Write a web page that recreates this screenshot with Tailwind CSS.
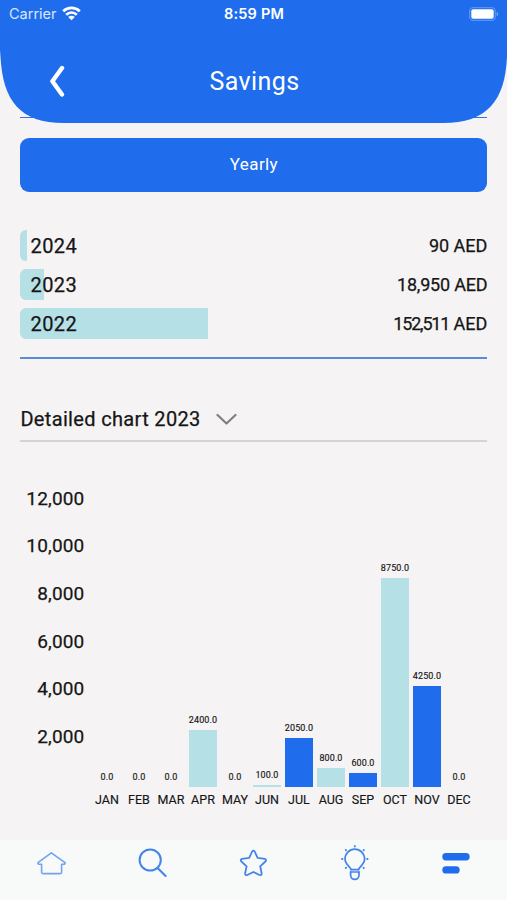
<!DOCTYPE html>
<html lang="en">

<head>
    <meta charset="UTF-8">
    <meta name="viewport" content="width=device-width, initial-scale=1.0">
    <title>Savings</title>
    <script src="https://cdn.jsdelivr.net/npm/@tailwindcss/browser@4"></script>
</head>

<body class="bg-[#f5f3f4] text-[#161616] font-['Roboto',sans-serif]">
    <div class="w-[507px] h-[900px] flex flex-col overflow-hidden">

        <!-- Header Section -->
        <header class="relative z-10 h-[123px] shrink-0 text-white">
            <svg class="absolute inset-0" width="507" height="123" viewBox="0 0 507 123" fill="#1f6dec">
                <path d="M0 0H507V57C505 101 487 123 443 123H64C20 123 3 101 .5 57L0 50Z" />
            </svg>

            <!-- Status Bar -->
            <div class="relative grid grid-cols-3 items-center h-7 pl-[9px] pr-2 font-['Inter',sans-serif]">
                <div class="flex items-center gap-[5px]">
                    <span class="text-[14.5px] text-[#d9e7ff]">Carrier</span>
                    <svg class="-mt-[2px]" width="19" height="15" viewBox="0 0 19 15" fill="none" stroke="#fff" stroke-width="2.7">
                        <path d="M1.2 5.2C6 .7 13 .7 17.8 5.2" />
                        <path d="M4.2 8.8C7.3 5.9 11.7 5.9 14.8 8.8" />
                        <path d="M9.5 14.2L6.2 11.1C8.2 9.3 10.8 9.3 12.8 11.1Z" fill="#fff" stroke="none" />
                    </svg>
                </div>
                <span class="text-center text-[14.5px] font-semibold tracking-[0.2px] whitespace-nowrap">8:59 PM</span>
                <svg class="justify-self-end -mt-px" width="30" height="14" viewBox="0 0 30 14">
                    <rect x=".7" y=".7" width="25.6" height="12.6" rx="3.8" fill="none" stroke="#5b93f2" stroke-width="1.3" />
                    <rect x="2.3" y="2.3" width="22.4" height="9.4" rx="2" fill="#fff" />
                    <path d="M27.7 4.7V9.3C29.7 8.4 29.7 5.6 27.7 4.7Z" fill="#79a8f6" />
                </svg>
            </div>

            <!-- Title -->
            <div class="relative flex items-center justify-center h-[107px] -mt-[1px] pl-[2px] pt-[2px]">
                <svg class="absolute left-[48px] top-[38px]" width="18" height="34" viewBox="0 0 18 34" fill="none" stroke="#fff" stroke-width="4.4" stroke-linecap="round" stroke-linejoin="round">
                    <path d="M14 3L4.4 16.3L14 29.5" />
                </svg>
                <h1 class="text-[25px] leading-none tracking-[0.4px]">Savings</h1>
            </div>
        </header>

        <main class="flex-1 pl-[20.4px]">
            <div class="w-[467px] -mt-[6px] border-t border-[#3272e0] pt-5">
                <button class="block w-full h-[53.5px] rounded-[9px] bg-[#1f6dec] text-white text-[17px] tracking-[0.4px]">Yearly</button>
            </div>

            <!-- Yearly totals -->
            <div class="w-[467px] mt-[38.5px] pb-[18px] flex flex-col gap-2 border-b-2 border-[#5a8ad8] [-webkit-text-stroke:0.25px_#161616]">
                <div class="relative flex items-center justify-between h-[31px]">
                    <div class="absolute left-0 h-full w-[7px] rounded-l-md bg-[#b5e0e6]"></div>
                    <span class="relative pl-[10px] text-[20px] tracking-[0.5px]">2024</span>
                    <span class="-mt-px text-[18px]">90 AED</span>
                </div>
                <div class="relative flex items-center justify-between h-[31px]">
                    <div class="absolute left-0 h-full w-[23.5px] rounded-l-md bg-[#b5e0e6]"></div>
                    <span class="relative pl-[10px] text-[20px] tracking-[0.5px]">2023</span>
                    <span class="-mt-px text-[18px] tracking-[-0.2px]">18,950 AED</span>
                </div>
                <div class="relative flex items-center justify-between h-[31px]">
                    <div class="absolute left-0 h-full w-[187.5px] rounded-l-md bg-[#b5e0e6]"></div>
                    <span class="relative pl-[10px] text-[20px] tracking-[0.5px]">2022</span>
                    <!-- tighter on the digits, normal on the currency -->
                    <span class="-mt-px text-[18px]"><span class="tracking-[-1.2px]">152,511</span> AED</span>
                </div>
            </div>

            <!-- Chart select -->
            <div class="w-[467px] h-[83px] pt-[39px] flex items-center gap-[15px] border-b-2 border-[#d5d4d5]">
                <span class="text-[20px] tracking-[0.34px] [-webkit-text-stroke:0.25px_#161616]">Detailed chart 2023</span>
                <svg width="21" height="13" viewBox="0 0 21 13" fill="none" stroke="#808080" stroke-width="2.2" stroke-linecap="round" stroke-linejoin="round">
                    <path d="M1.5 2L10.5 10.5L19.5 2" />
                </svg>
            </div>

            <!-- Monthly chart -->
            <div class="flex mt-[33px]">
                <div class="w-[64px] text-[19px] tracking-[0.15px] [-webkit-text-stroke:0.25px_#161616]">
                    <div class="h-[47.7px] flex items-center justify-end">12,000</div>
                    <div class="h-[47.7px] flex items-center justify-end">10,000</div>
                    <div class="h-[47.7px] flex items-center justify-end">8,000</div>
                    <div class="h-[47.7px] flex items-center justify-end">6,000</div>
                    <div class="h-[47.7px] flex items-center justify-end">4,000</div>
                    <div class="h-[47.7px] flex items-center justify-end">2,000</div>
                </div>
                <div id="chart" class="ml-[6.6px] h-[332px] grid grid-cols-12 w-[384px]"></div>
            </div>
        </main>

        <!-- Bottom Nav -->
        <nav class="h-[60px] shrink-0 grid grid-cols-5 bg-[#f8f9f9] text-[#4384ea]">
            <a class="flex justify-center pt-[10px]">
                <svg width="32" height="32" viewBox="0 0 32 32" fill="none" stroke="#73a2f0" stroke-width="1.6" stroke-linejoin="round" stroke-linecap="round">
                    <path d="M16.3 2.8L29.7 12.3Q30.7 13.7 29.2 14.2H26.6V22.3Q26.6 23.6 25.2 23.6H8Q6.6 23.6 6.6 22.3V14.2H3.8Q2.3 13.7 3.3 12.3Z" />
                </svg>
            </a>
            <a class="flex justify-center pt-[7px]">
                <svg width="32" height="32" viewBox="0 0 32 32" fill="none" stroke="currentColor" stroke-width="2" stroke-linecap="round">
                    <circle cx="14.2" cy="13" r="10.6" />
                    <path d="M21.6 21L29.6 29" />
                </svg>
            </a>
            <a class="flex justify-center pt-[7px]">
                <svg width="32" height="32" viewBox="0 0 32 32" fill="none" stroke="currentColor" stroke-width="1.8" stroke-linejoin="round">
                    <path d="M15.1 4.5Q16.4 2.8 17.7 4.5L20.6 10.9L27.8 11.9Q29.9 12.7 28.4 14.5L23.2 19.3L24.7 26.5Q24.6 28.6 22.4 28L16.4 25L10.4 28Q8.2 28.6 8.1 26.5L9.6 19.3L4.4 14.5Q2.9 12.7 5 11.9L12.2 10.9Z" />
                </svg>
            </a>
            <a class="flex justify-center pt-[4px]">
                <svg width="32" height="38" viewBox="0 0 32 38" fill="none" stroke="currentColor" stroke-width="1.7" stroke-linecap="round">
                    <path d="M12 25.5C12 23.3 6 20.5 6 15A9.8 9.8 0 0 1 25.6 15C25.6 20.5 19.6 23.3 19.6 25.5" />
                    <path d="M12 25.6H19.6M11.6 28H20" />
                    <path d="M11.6 28V31C11.6 36.8 20 36.8 20 31V28" />
                    <path d="M15.8 2V2.5M3 15H3.5M28.1 15H28.6M6.8 6L7.1 6.3M24.8 6L24.5 6.3M6.8 24L7.1 23.7M24.8 24L24.5 23.7" stroke-width="1.8" />
                </svg>
            </a>
            <a class="flex justify-center pt-[13px]">
                <svg width="28" height="22" viewBox="0 0 28 22" fill="#1f6dec">
                    <rect x=".3" y="0" width="27.4" height="7.4" rx="3.7" />
                    <rect x=".3" y="13.2" width="17.4" height="7.4" rx="3.7" />
                </svg>
            </a>
        </nav>
    </div>

    <script>
        const months = [
            ["JAN", 0], ["FEB", 0], ["MAR", 0], ["APR", 2400],
            ["MAY", 0], ["JUN", 100], ["JUL", 2050], ["AUG", 800],
            ["SEP", 600], ["OCT", 8750], ["NOV", 4250], ["DEC", 0]
        ];
        const pxPerUnit = 0.02386;

        document.getElementById("chart").innerHTML = months.map(([name, value], i) => `
            <div class="flex flex-col items-center justify-end">
                <span class="text-[9px] leading-[10px] mb-[5px] tracking-[0.1px] [-webkit-text-stroke:0.15px_#161616]">${value.toFixed(1)}</span>
                <div class="w-[27.5px] ${i % 2 ? "bg-[#b5e0e6]" : "bg-[#1f6dec]"}" style="height:${value * pxPerUnit}px"></div>
                <span class="text-[12.5px] leading-[14px] mt-[6px] [-webkit-text-stroke:0.15px_#161616]">${name}</span>
            </div>`).join("");
    </script>
</body>

</html>
